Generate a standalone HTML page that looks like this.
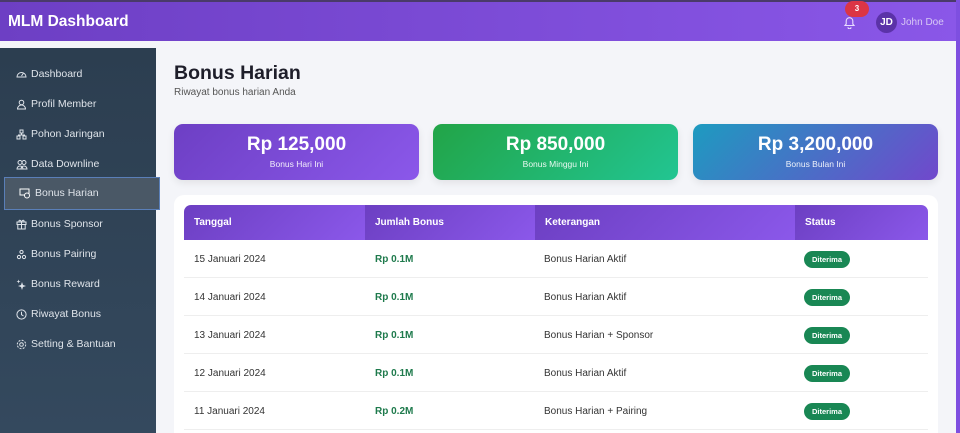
<!DOCTYPE html>
<html><head><meta charset="utf-8"><style>
*{margin:0;padding:0;box-sizing:border-box}
html,body{width:960px;height:433px;overflow:hidden}
body{background:#f4f5f9;font-family:"Liberation Sans",sans-serif;position:relative}
.hdr{position:absolute;left:0;top:0;width:960px;height:41px;background:linear-gradient(90deg,#6d3fc4,#8a57e8);border-top:2px solid #4a3a6a}
.hdr h1{position:absolute;left:8px;top:11px;color:#fff;font-size:15.5px;font-weight:bold}
.bell{position:absolute;left:843px;top:13px}
.badge{position:absolute;left:845px;top:-1px;width:24px;height:16px;border-radius:8px;background:#dc3545;color:#fff;font-size:8px;font-weight:bold;text-align:center;line-height:16px}
.av{position:absolute;left:876px;top:10px;width:21px;height:21px;border-radius:50%;background:#5b32a8;color:#fff;font-size:10px;font-weight:bold;text-align:center;line-height:21px}
.un{position:absolute;left:901px;top:15px;color:#d8c8f5;font-size:10px}
.rbar{position:absolute;left:956px;top:0;width:4px;height:433px;background:#7e4fe0}
.side{position:absolute;left:0;top:48px;width:156px;height:385px;background:linear-gradient(180deg,#2c3e50,#34495e)}
.it{position:absolute;left:0;width:156px;height:30px;color:#dfe4ea;font-size:10.5px;line-height:30px;padding-left:31px}
.it svg{position:absolute;left:16px;top:10px}
.act{left:4px;width:156px;background:#4a5866;border:1px solid #5a7fb8;padding-left:30px}
.act svg{left:14px}
.t{position:absolute;left:174px;top:62px;font-size:19.5px;font-weight:bold;color:#1e1e2a}
.st{position:absolute;left:174px;top:87px;font-size:10px;color:#555}
.card{position:absolute;top:124px;width:245px;height:56px;border-radius:9px;color:#fff;text-align:center;box-shadow:0 3px 8px rgba(0,0,0,.08)}
.card b{display:block;font-size:19px;font-weight:bold;margin-top:10px}
.card span{display:block;font-size:8.5px;opacity:.9;margin-top:3px}
.box{position:absolute;left:174px;top:195px;width:764px;height:250px;background:#fff;border-radius:10px}
.th{position:absolute;top:205px;height:35px;color:#fff;font-size:10px;font-weight:bold;line-height:35px;padding-left:10px;background:linear-gradient(135deg,#6c3fc2,#8b58ea)}
.row{position:absolute;left:184px;width:744px;height:38px;border-bottom:1px solid #eee;font-size:10px;color:#333}
.row div{position:absolute;top:14px}
.g{color:#1e7a4c;font-weight:bold}
.pill{background:#198754;color:#fff;font-size:7.5px;font-weight:bold;border-radius:9px;padding:4px 8px;top:11px!important}
</style></head><body>
<div class="hdr"><h1>MLM Dashboard</h1>
<svg class="bell" width="13" height="14" viewBox="0 0 13 14" fill="none" stroke="#e8dcff" stroke-width="1.1"><path d="M2 10.5h9l-1.2-1.5V6a3.3 3.3 0 0 0-6.6 0v3z"/><path d="M5 12.3a1.5 1.5 0 0 0 3 0"/></svg>
<div class="badge">3</div>
<div class="av">JD</div><div class="un">John Doe</div></div>
<div class="rbar"></div>
<div class="side">
<div class="it" style="top:11px"><svg width="11" height="10" viewBox="0 0 11 10" fill="none" stroke="#dfe4ea"><path d="M1 8a4.5 4.5 0 1 1 9 0z"/><path d="M5.5 7l2-3"/></svg>Dashboard</div>
<div class="it" style="top:41px"><svg width="11" height="11" viewBox="0 0 11 11" fill="none" stroke="#dfe4ea"><circle cx="5.5" cy="3.5" r="2.3"/><path d="M1.5 10a4 4 0 0 1 8 0z"/></svg>Profil Member</div>
<div class="it" style="top:71px"><svg width="11" height="11" viewBox="0 0 11 11" fill="none" stroke="#dfe4ea"><rect x="4" y="1" width="3" height="3"/><rect x="1" y="7" width="3" height="3"/><rect x="7" y="7" width="3" height="3"/><path d="M5.5 4v2M2.5 7V6h6v1"/></svg>Pohon Jaringan</div>
<div class="it" style="top:101px"><svg width="12" height="11" viewBox="0 0 12 11" fill="none" stroke="#dfe4ea"><circle cx="4" cy="3.5" r="2"/><circle cx="8" cy="3.5" r="2"/><path d="M1 10a3 3 0 0 1 6 0zM5 10a3 3 0 0 1 6 0z"/></svg>Data Downline</div>
<div class="it act" style="top:129px;height:33px;line-height:31px"><svg width="12" height="11" viewBox="0 0 12 11" fill="none" stroke="#fff"><rect x="1" y="1" width="9" height="6"/><circle cx="8" cy="7.5" r="2.5" fill="#4a5866"/></svg>Bonus Harian</div>
<div class="it" style="top:161px"><svg width="11" height="11" viewBox="0 0 11 11" fill="none" stroke="#dfe4ea"><rect x="1" y="3" width="9" height="2.5"/><rect x="1.8" y="5.5" width="7.4" height="4.5"/><path d="M5.5 3v7M5.5 3C4 0 2 1.5 3.5 3M5.5 3C7 0 9 1.5 7.5 3"/></svg>Bonus Sponsor</div>
<div class="it" style="top:191px"><svg width="11" height="11" viewBox="0 0 11 11" fill="none" stroke="#dfe4ea"><circle cx="5.5" cy="3" r="1.6"/><circle cx="3" cy="8" r="1.6"/><circle cx="8" cy="8" r="1.6"/></svg>Bonus Pairing</div>
<div class="it" style="top:221px"><svg width="11" height="11" viewBox="0 0 11 11" fill="#dfe4ea"><path d="M6 3l1 3 3 1-3 1-1 3-1-3-3-1 3-1z"/><path d="M2.5 0.5l.5 1.5 1.5.5-1.5.5-.5 1.5-.5-1.5L.5 2.5 2 2z"/></svg>Bonus Reward</div>
<div class="it" style="top:251px"><svg width="11" height="11" viewBox="0 0 11 11" fill="none" stroke="#dfe4ea"><circle cx="5.5" cy="5.5" r="4.6"/><path d="M5.5 2.8v2.9l2 1.3"/></svg>Riwayat Bonus</div>
<div class="it" style="top:281px"><svg width="11" height="11" viewBox="0 0 11 11" fill="none" stroke="#dfe4ea"><circle cx="5.5" cy="5.5" r="1.8"/><circle cx="5.5" cy="5.5" r="4.2" stroke-dasharray="2 1.3"/></svg>Setting &amp; Bantuan</div>
</div>
<div class="t">Bonus Harian</div>
<div class="st">Riwayat bonus harian Anda</div>
<div class="card" style="left:174px;background:linear-gradient(135deg,#6d3fc4,#8b58ea)"><b>Rp 125,000</b><span>Bonus Hari Ini</span></div>
<div class="card" style="left:433px;background:linear-gradient(135deg,#22a447,#22c592)"><b>Rp 850,000</b><span>Bonus Minggu Ini</span></div>
<div class="card" style="left:693px;background:linear-gradient(135deg,#1d9bc0,#7148cc)"><b>Rp 3,200,000</b><span>Bonus Bulan Ini</span></div>
<div class="box"></div>
<div class="th" style="left:184px;width:181px;border-top-left-radius:7px">Tanggal</div>
<div class="th" style="left:365px;width:170px">Jumlah Bonus</div>
<div class="th" style="left:535px;width:260px">Keterangan</div>
<div class="th" style="left:795px;width:133px;border-top-right-radius:7px">Status</div>
<div class="row" style="top:240px"><div style="left:10px">15 Januari 2024</div><div class="g" style="left:191px">Rp 0.1M</div><div style="left:360px">Bonus Harian Aktif</div><div class="pill" style="left:620px">Diterima</div></div>
<div class="row" style="top:278px"><div style="left:10px">14 Januari 2024</div><div class="g" style="left:191px">Rp 0.1M</div><div style="left:360px">Bonus Harian Aktif</div><div class="pill" style="left:620px">Diterima</div></div>
<div class="row" style="top:316px"><div style="left:10px">13 Januari 2024</div><div class="g" style="left:191px">Rp 0.1M</div><div style="left:360px">Bonus Harian + Sponsor</div><div class="pill" style="left:620px">Diterima</div></div>
<div class="row" style="top:354px"><div style="left:10px">12 Januari 2024</div><div class="g" style="left:191px">Rp 0.1M</div><div style="left:360px">Bonus Harian Aktif</div><div class="pill" style="left:620px">Diterima</div></div>
<div class="row" style="top:392px"><div style="left:10px">11 Januari 2024</div><div class="g" style="left:191px">Rp 0.2M</div><div style="left:360px">Bonus Harian + Pairing</div><div class="pill" style="left:620px">Diterima</div></div>
</body></html>
